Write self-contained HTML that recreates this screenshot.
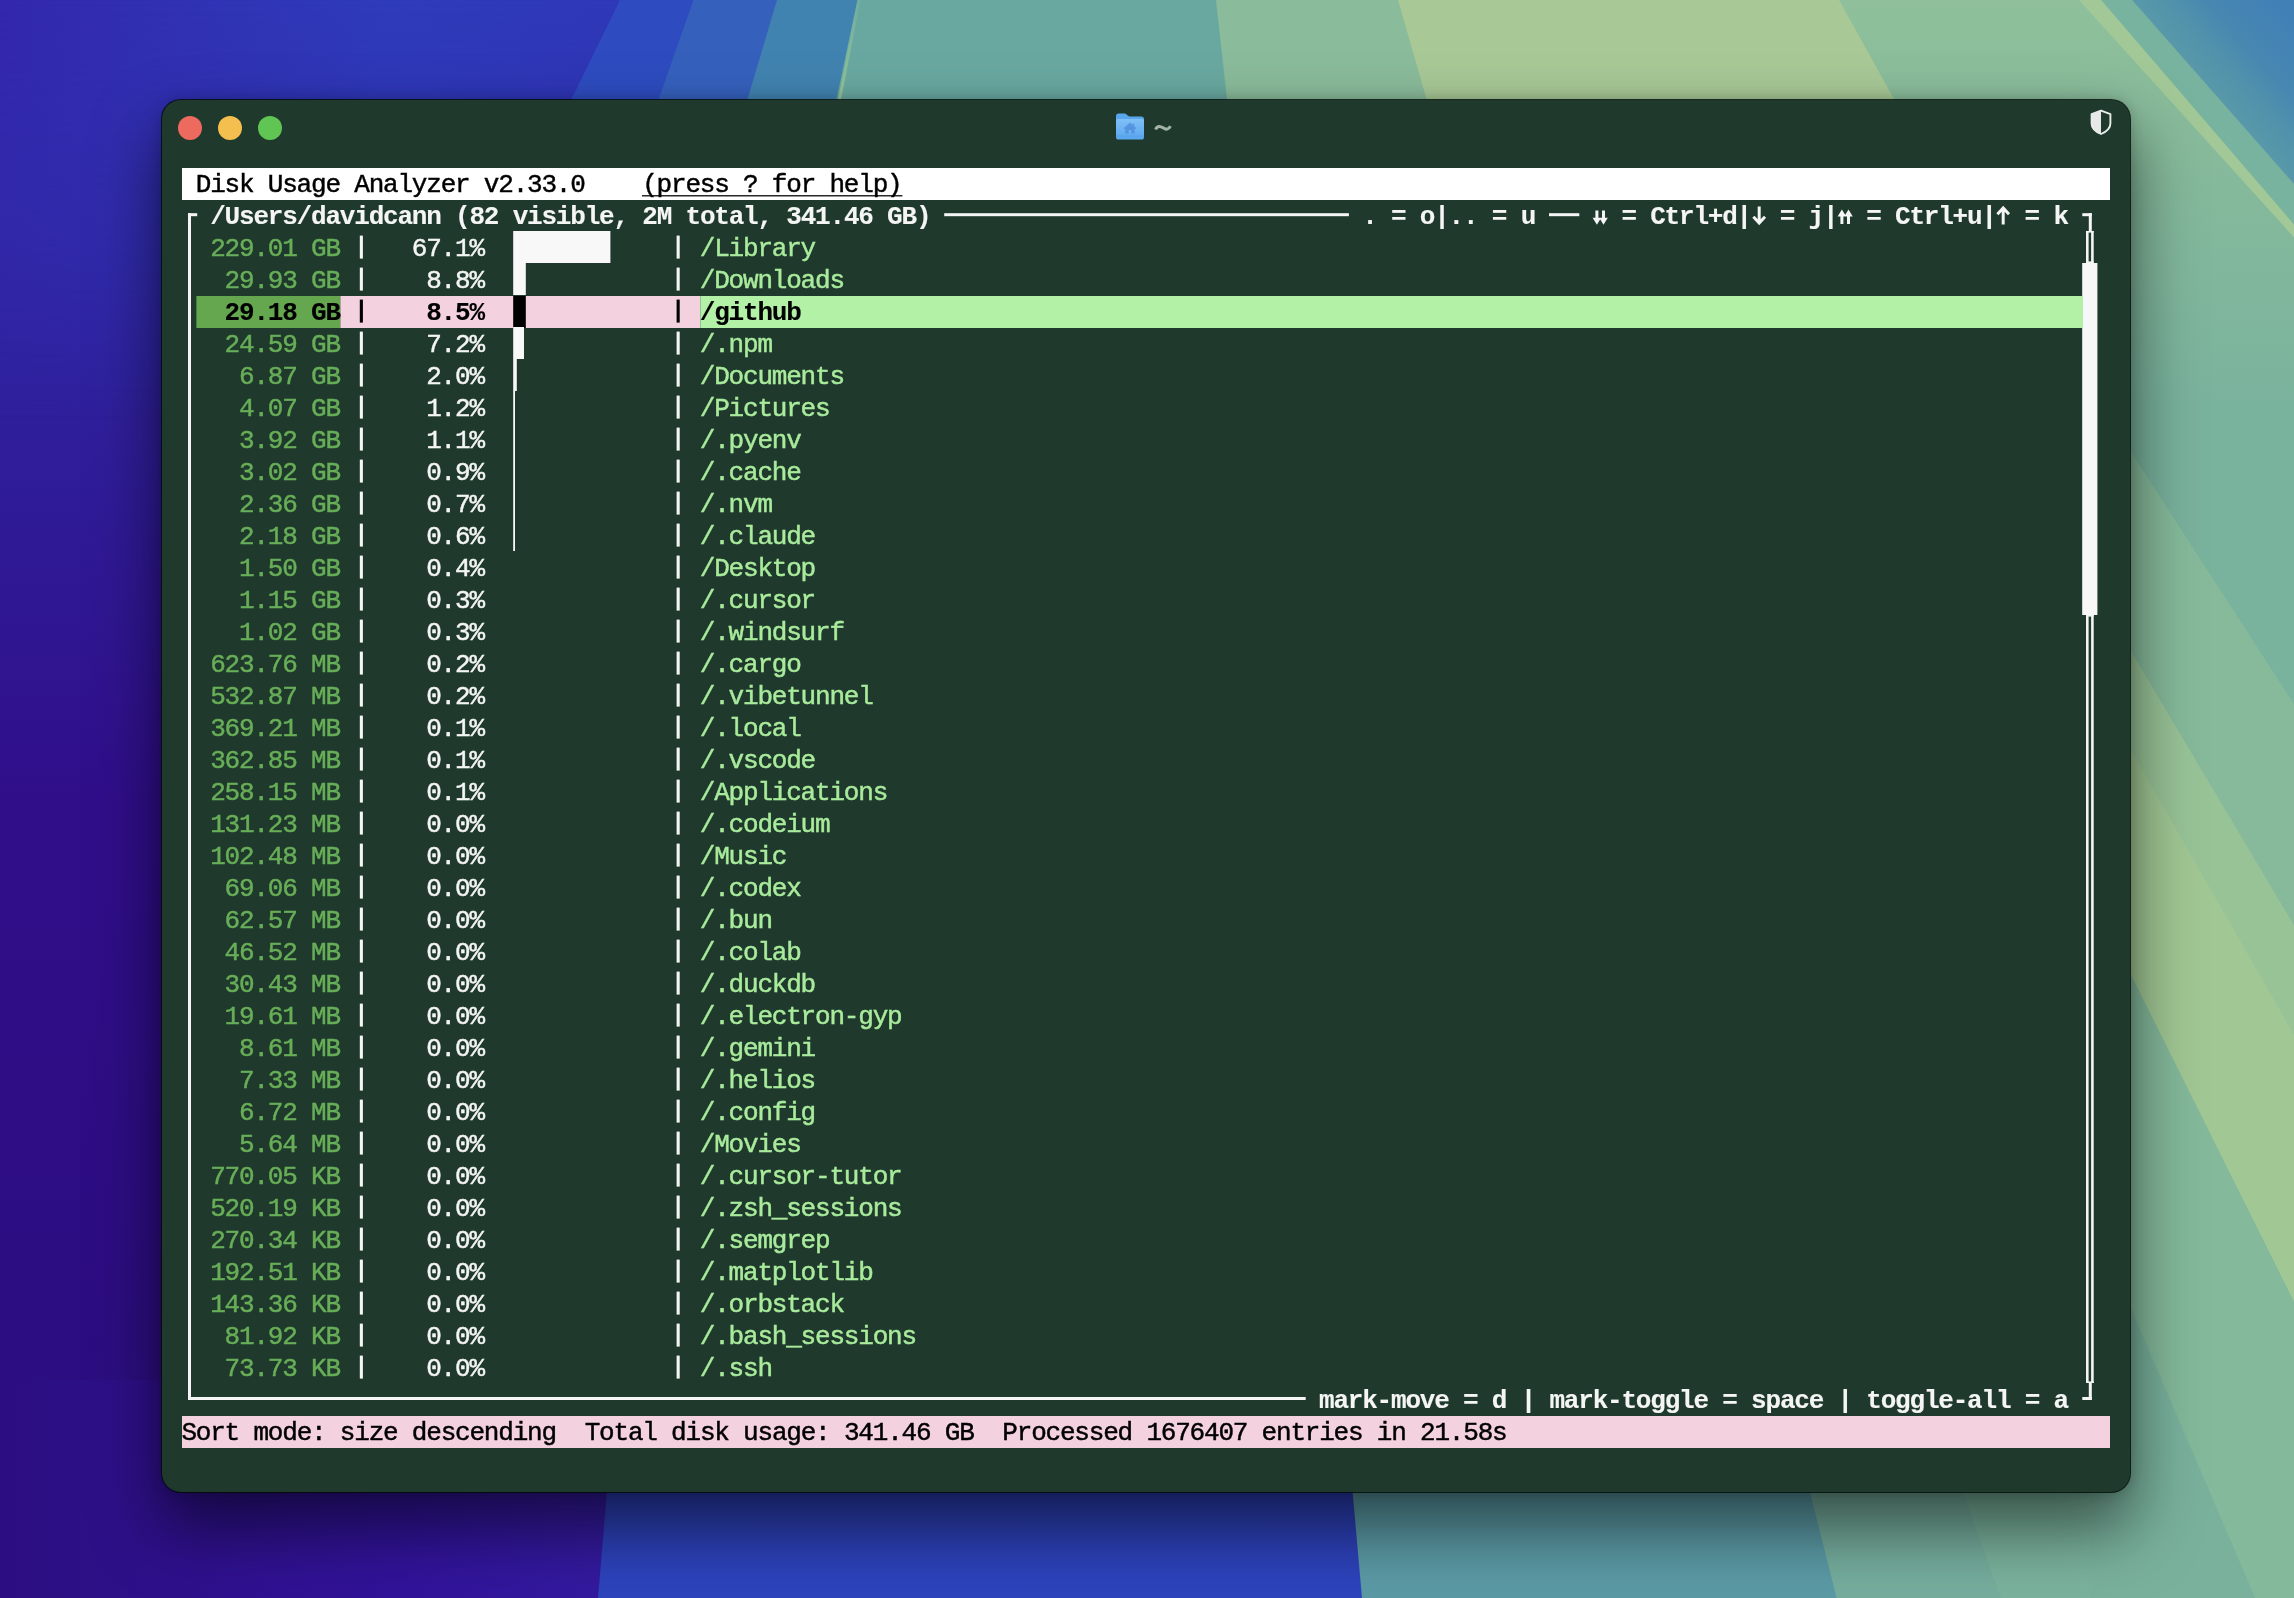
<!DOCTYPE html>
<html><head><meta charset="utf-8"><title>~</title>
<style>
html,body{margin:0;padding:0;}
body{width:2294px;height:1598px;overflow:hidden;position:relative;background:#2e1a8c;font-family:"Liberation Mono",monospace;}
#wall{position:absolute;left:0;top:0;width:2294px;height:1598px;}
#win{position:absolute;left:162px;top:100px;width:1968px;height:1392px;border-radius:19px;background:#1f3a2c;
 box-shadow:0 0 0 1px rgba(0,10,5,.8), 0 34px 64px 4px rgba(0,0,0,.52), 0 0 14px rgba(0,0,0,.22);}
.tl{position:absolute;width:24px;height:24px;border-radius:12px;top:116px;}
.t{position:absolute;height:32px;line-height:32px;font-size:26px;letter-spacing:-1.2px;white-space:pre;margin-top:1px;margin-left:-0.6px;-webkit-text-stroke:0.45px currentColor;}
.r{position:absolute;}
#term{position:absolute;left:0;top:0;width:2294px;height:1598px;will-change:transform;}
.k{color:#000;} .w{color:#f4f5f4;} .sg{color:#68ae58;} .ng{color:#a9eb9c;}
.b{font-weight:bold;-webkit-text-stroke:0.12px currentColor;}
.u{}
</style></head><body>
<svg id="wall" width="2294" height="1598" viewBox="0 0 2294 1598">
<defs>
<linearGradient id="gL" x1="0" y1="0" x2="0" y2="1">
<stop offset="0" stop-color="#312db0"/><stop offset="0.12" stop-color="#2f2aa8"/><stop offset="0.3" stop-color="#2f1c98"/><stop offset="0.5" stop-color="#300e8a"/><stop offset="0.8" stop-color="#2d0d82"/><stop offset="1" stop-color="#2b107f"/>
</linearGradient>
<linearGradient id="gT" x1="0" y1="0" x2="1" y2="0">
<stop offset="0" stop-color="#3327ac"/><stop offset="0.3" stop-color="#3033b4"/><stop offset="0.55" stop-color="#2e3bba"/><stop offset="1" stop-color="#2f37b7"/>
</linearGradient>
<linearGradient id="gTm" x1="0" y1="0" x2="0" y2="1">
<stop offset="0" stop-color="#fff" stop-opacity="1"/><stop offset="1" stop-color="#fff" stop-opacity="0"/>
</linearGradient>
<mask id="mT"><rect x="0" y="0" width="700" height="420" fill="url(#gTm)"/></mask>
<linearGradient id="gB" gradientUnits="userSpaceOnUse" x1="2200" y1="105" x2="2294" y2="22">
<stop offset="0" stop-color="#5d9ca8"/><stop offset="0.35" stop-color="#5293ab"/><stop offset="0.6" stop-color="#4787b1"/><stop offset="1" stop-color="#4180b6"/>
</linearGradient>
<linearGradient id="gG" gradientUnits="userSpaceOnUse" x1="0" y1="0" x2="0" y2="420">
<stop offset="0" stop-color="#8fc09b"/><stop offset="0.3" stop-color="#88bb9b"/><stop offset="1" stop-color="#79b29d"/>
</linearGradient>
<linearGradient id="gS" gradientUnits="userSpaceOnUse" x1="0" y1="0" x2="0" y2="100"><stop offset="0" stop-color="#8fc09a" stop-opacity="0.2"/><stop offset="1" stop-color="#9cc898" stop-opacity="0.9"/></linearGradient>
<linearGradient id="gP" x1="0" y1="0" x2="1" y2="0">
<stop offset="0" stop-color="#2c0e81"/><stop offset="0.6" stop-color="#31139a"/><stop offset="1" stop-color="#341da0"/>
</linearGradient>
<linearGradient id="gBl" x1="0" y1="0" x2="0" y2="1">
<stop offset="0" stop-color="#2a37ae"/><stop offset="1" stop-color="#2d44bd"/>
</linearGradient>
</defs>
<rect width="2294" height="1598" fill="url(#gL)"/>
<rect x="0" y="0" width="700" height="420" fill="url(#gT)" mask="url(#mT)"/>
<polygon points="620.0,0.0 2294.0,0.0 2294.0,820.0 218.3,820.0" fill="#2e4cbf" />
<polygon points="693.5,0.0 2294.0,0.0 2294.0,820.0 405.3,820.0" fill="#3561bd" />
<polygon points="777.0,0.0 2294.0,0.0 2294.0,820.0 533.5,820.0" fill="#4183b0" />
<polygon points="857.4,0.0 2294.0,0.0 2294.0,820.0 684.3,820.0" fill="#69a8a0" />
<polygon points="1216.0,0.0 2294.0,0.0 2294.0,820.0 1307.1,820.0" fill="#8abb9a" />
<polygon points="1398.0,0.0 2294.0,0.0 2294.0,820.0 1634.1,820.0" fill="#a8c896" />
<polygon points="1839.0,0.0 2294.0,0.0 2294.0,820.0 2294.6,820.0" fill="url(#gG)" />
<polygon points="857.4,0.0 860.5,0.0 839.0,110.0 836.0,110.0" fill="url(#gS)" />
<rect x="0" y="1380" width="700" height="218" fill="url(#gP)"/>
<polygon points="616.5,1380.0 2294.0,1380.0 2294.0,1598.0 598.0,1598.0" fill="url(#gBl)" />
<polygon points="1342.7,1380.0 2294.0,1380.0 2294.0,1598.0 1362.0,1598.0" fill="#5b9aa5" />
<polygon points="1781.9,1380.0 2294.0,1380.0 2294.0,1598.0 1836.6,1598.0" fill="#75ad9d" />
<polygon points="1922.8,1380.0 2294.0,1380.0 2294.0,1598.0 2001.0,1598.0" fill="#7ab29d" />
<rect x="2090" y="400" width="204" height="1198" fill="#79b29d"/>
<polygon points="2090.0,388.6 2294.0,704.0 2294.0,925.0 2090.0,582.1" fill="#86ba9b" />
<polygon points="2090.0,582.1 2294.0,925.0 2294.0,1302.0 2090.0,892.7" fill="#98c397" />
<polygon points="2090.0,678.9 2294.0,1035.0 2294.0,1302.0 2090.0,892.7" fill="#a1c794" />
<polygon points="2090.0,892.7 2294.0,1302.0 2294.0,1598.0 2255.0,1598.0 2090.0,1213.4" fill="#84b99b" />
<polygon points="2090.0,1213.4 2255.0,1598.0 2090.0,1598.0" fill="#79b19d" />
<polygon points="2101.0,0.0 2132.0,0.0 2294.0,184.0 2294.0,224.5" fill="#78b3a0" />
<polygon points="2079.0,0.0 2101.0,0.0 2294.0,224.5 2294.0,237.5" fill="#a3c897" />
<polygon points="2132.0,0.0 2294.0,0.0 2294.0,184.0" fill="url(#gB)" />
</svg>
<div id="win"></div>
<div class="tl" style="left:178px;background:#ed6a5e"></div>
<div class="tl" style="left:218px;background:#f5bf4f"></div>
<div class="tl" style="left:258px;background:#61c554"></div>
<svg class="r" style="left:1114px;top:111px" width="32" height="32" viewBox="0 0 32 32">
<defs><linearGradient id="fg" x1="0" y1="0" x2="0" y2="1"><stop offset="0" stop-color="#7fc0f6"/><stop offset="1" stop-color="#58a6ee"/></linearGradient></defs>
<path d="M2 5.2Q2 2.4 4.8 2.4H10.2Q11.6 2.4 12.6 3.4L14 4.8Q14.8 5.4 16 5.4H27.2Q30 5.4 30 8.2V12H2Z" fill="#5aa6ec"/>
<path d="M2 9.6Q2 8 3.6 8H28.4Q30 8 30 9.6V26Q30 28.6 27.4 28.6H4.6Q2 28.6 2 26Z" fill="url(#fg)"/>
<rect x="2" y="24.6" width="28" height="1" fill="#4a98e2" opacity=".55"/>
<path d="M16 11.6L9.6 17.2L10.6 18.2L11.4 17.5V22.6H20.6V17.5L21.4 18.2L22.4 17.2L20.2 15.3V12.6H18.8V14.1ZM14.6 19H17.4V22.6H14.6Z" fill="#4a86d6" fill-rule="evenodd" opacity=".7"/>
</svg>
<svg class="r" style="left:1154px;top:121px" width="18" height="14" viewBox="0 0 18 14"><path d="M1.6 8.6C3 4.6 6 4.8 9 6.8S14.8 8.8 16.4 5.2" stroke="#a3b3a6" stroke-width="3" fill="none"/></svg>
<svg class="r" style="left:2088px;top:108px" width="26" height="28" viewBox="0 0 26 28">
<path d="M13 2.6L22.4 6.2V15.4C22.4 20 18.4 23.6 13 26C7.600 23.6 3.6 20 3.6 15.4V6.2Z" fill="none" stroke="#e8eeea" stroke-width="1.9" stroke-linejoin="round"/>
<path d="M13 2.6L3.6 6.2V15.4C3.6 20 7.6 23.6 13 26Z" fill="#e6e9e7"/>
</svg>
<div id="term">
<svg class="r" style="left:0;top:0" width="2294" height="1598" viewBox="0 0 2294 1598"><rect x="182.00" y="168.00" width="1928.00" height="32.00" fill="#ffffff"/>
<rect x="642.00" y="195.00" width="260.40" height="1.50" fill="#2a2a2a"/>
<rect x="182.00" y="1416.00" width="1928.00" height="32.00" fill="#f3d1de"/>
<rect x="188.00" y="213.20" width="3.00" height="1186.80" fill="#f4f5f4"/>
<rect x="188.00" y="213.20" width="9.20" height="3.00" fill="#f4f5f4"/>
<rect x="944.20" y="213.20" width="404.70" height="3.00" fill="#f4f5f4"/>
<rect x="2082.30" y="213.20" width="9.50" height="3.00" fill="#f4f5f4"/>
<rect x="2088.80" y="213.20" width="3.00" height="17.80" fill="#f4f5f4"/>
<rect x="188.00" y="1397.00" width="1117.70" height="3.00" fill="#f4f5f4"/>
<rect x="2082.30" y="1397.00" width="9.50" height="3.00" fill="#f4f5f4"/>
<rect x="2088.80" y="1383.00" width="3.00" height="17.00" fill="#f4f5f4"/>
<rect x="1549.00" y="213.20" width="30.30" height="3.00" fill="#f4f5f4"/>
<rect x="2086.00" y="231.00" width="2.60" height="32.00" fill="#f4f5f4"/>
<rect x="2091.10" y="231.00" width="2.60" height="32.00" fill="#f4f5f4"/>
<rect x="2086.00" y="231.00" width="7.70" height="1.60" fill="#f4f5f4"/>
<rect x="2086.00" y="261.40" width="7.70" height="1.60" fill="#f4f5f4"/>
<rect x="2082.20" y="263.00" width="15.20" height="352.00" fill="#f7f7f8"/>
<rect x="2086.00" y="615.00" width="2.60" height="768.00" fill="#f4f5f4"/>
<rect x="2091.10" y="615.00" width="2.60" height="768.00" fill="#f4f5f4"/>
<rect x="2086.00" y="615.00" width="7.70" height="1.60" fill="#f4f5f4"/>
<rect x="2086.00" y="1381.40" width="7.70" height="1.60" fill="#f4f5f4"/>
<rect x="359.80" y="235.60" width="3.10" height="23.00" fill="#f4f5f4"/>
<rect x="676.60" y="235.60" width="3.10" height="23.00" fill="#f4f5f4"/>
<rect x="513.20" y="231.00" width="97.20" height="32.00" fill="#f8f8f9"/>
<rect x="359.80" y="267.60" width="3.10" height="23.00" fill="#f4f5f4"/>
<rect x="676.60" y="267.60" width="3.10" height="23.00" fill="#f4f5f4"/>
<rect x="513.20" y="263.00" width="12.60" height="32.00" fill="#f8f8f9"/>
<rect x="196.40" y="296.00" width="144.00" height="32.00" fill="#64a74e"/>
<rect x="340.40" y="296.00" width="360.00" height="32.00" fill="#f3d1de"/>
<rect x="700.40" y="296.00" width="1382.40" height="32.00" fill="#b2f1a6"/>
<rect x="359.80" y="299.60" width="3.10" height="23.00" fill="#000"/>
<rect x="676.60" y="299.60" width="3.10" height="23.00" fill="#000"/>
<rect x="513.20" y="296.00" width="12.60" height="32.00" fill="#000"/>
<rect x="359.80" y="331.60" width="3.10" height="23.00" fill="#f4f5f4"/>
<rect x="676.60" y="331.60" width="3.10" height="23.00" fill="#f4f5f4"/>
<rect x="513.20" y="327.00" width="10.80" height="32.00" fill="#f8f8f9"/>
<rect x="359.80" y="363.60" width="3.10" height="23.00" fill="#f4f5f4"/>
<rect x="676.60" y="363.60" width="3.10" height="23.00" fill="#f4f5f4"/>
<rect x="513.20" y="359.00" width="3.60" height="32.00" fill="#f8f8f9"/>
<rect x="359.80" y="395.60" width="3.10" height="23.00" fill="#f4f5f4"/>
<rect x="676.60" y="395.60" width="3.10" height="23.00" fill="#f4f5f4"/>
<rect x="513.20" y="391.00" width="1.80" height="32.00" fill="#f8f8f9"/>
<rect x="359.80" y="427.60" width="3.10" height="23.00" fill="#f4f5f4"/>
<rect x="676.60" y="427.60" width="3.10" height="23.00" fill="#f4f5f4"/>
<rect x="513.20" y="423.00" width="1.80" height="32.00" fill="#f8f8f9"/>
<rect x="359.80" y="459.60" width="3.10" height="23.00" fill="#f4f5f4"/>
<rect x="676.60" y="459.60" width="3.10" height="23.00" fill="#f4f5f4"/>
<rect x="513.20" y="455.00" width="1.80" height="32.00" fill="#f8f8f9"/>
<rect x="359.80" y="491.60" width="3.10" height="23.00" fill="#f4f5f4"/>
<rect x="676.60" y="491.60" width="3.10" height="23.00" fill="#f4f5f4"/>
<rect x="513.20" y="487.00" width="1.80" height="32.00" fill="#f8f8f9"/>
<rect x="359.80" y="523.60" width="3.10" height="23.00" fill="#f4f5f4"/>
<rect x="676.60" y="523.60" width="3.10" height="23.00" fill="#f4f5f4"/>
<rect x="513.20" y="519.00" width="1.80" height="32.00" fill="#f8f8f9"/>
<rect x="359.80" y="555.60" width="3.10" height="23.00" fill="#f4f5f4"/>
<rect x="676.60" y="555.60" width="3.10" height="23.00" fill="#f4f5f4"/>
<rect x="359.80" y="587.60" width="3.10" height="23.00" fill="#f4f5f4"/>
<rect x="676.60" y="587.60" width="3.10" height="23.00" fill="#f4f5f4"/>
<rect x="359.80" y="619.60" width="3.10" height="23.00" fill="#f4f5f4"/>
<rect x="676.60" y="619.60" width="3.10" height="23.00" fill="#f4f5f4"/>
<rect x="359.80" y="651.60" width="3.10" height="23.00" fill="#f4f5f4"/>
<rect x="676.60" y="651.60" width="3.10" height="23.00" fill="#f4f5f4"/>
<rect x="359.80" y="683.60" width="3.10" height="23.00" fill="#f4f5f4"/>
<rect x="676.60" y="683.60" width="3.10" height="23.00" fill="#f4f5f4"/>
<rect x="359.80" y="715.60" width="3.10" height="23.00" fill="#f4f5f4"/>
<rect x="676.60" y="715.60" width="3.10" height="23.00" fill="#f4f5f4"/>
<rect x="359.80" y="747.60" width="3.10" height="23.00" fill="#f4f5f4"/>
<rect x="676.60" y="747.60" width="3.10" height="23.00" fill="#f4f5f4"/>
<rect x="359.80" y="779.60" width="3.10" height="23.00" fill="#f4f5f4"/>
<rect x="676.60" y="779.60" width="3.10" height="23.00" fill="#f4f5f4"/>
<rect x="359.80" y="811.60" width="3.10" height="23.00" fill="#f4f5f4"/>
<rect x="676.60" y="811.60" width="3.10" height="23.00" fill="#f4f5f4"/>
<rect x="359.80" y="843.60" width="3.10" height="23.00" fill="#f4f5f4"/>
<rect x="676.60" y="843.60" width="3.10" height="23.00" fill="#f4f5f4"/>
<rect x="359.80" y="875.60" width="3.10" height="23.00" fill="#f4f5f4"/>
<rect x="676.60" y="875.60" width="3.10" height="23.00" fill="#f4f5f4"/>
<rect x="359.80" y="907.60" width="3.10" height="23.00" fill="#f4f5f4"/>
<rect x="676.60" y="907.60" width="3.10" height="23.00" fill="#f4f5f4"/>
<rect x="359.80" y="939.60" width="3.10" height="23.00" fill="#f4f5f4"/>
<rect x="676.60" y="939.60" width="3.10" height="23.00" fill="#f4f5f4"/>
<rect x="359.80" y="971.60" width="3.10" height="23.00" fill="#f4f5f4"/>
<rect x="676.60" y="971.60" width="3.10" height="23.00" fill="#f4f5f4"/>
<rect x="359.80" y="1003.60" width="3.10" height="23.00" fill="#f4f5f4"/>
<rect x="676.60" y="1003.60" width="3.10" height="23.00" fill="#f4f5f4"/>
<rect x="359.80" y="1035.60" width="3.10" height="23.00" fill="#f4f5f4"/>
<rect x="676.60" y="1035.60" width="3.10" height="23.00" fill="#f4f5f4"/>
<rect x="359.80" y="1067.60" width="3.10" height="23.00" fill="#f4f5f4"/>
<rect x="676.60" y="1067.60" width="3.10" height="23.00" fill="#f4f5f4"/>
<rect x="359.80" y="1099.60" width="3.10" height="23.00" fill="#f4f5f4"/>
<rect x="676.60" y="1099.60" width="3.10" height="23.00" fill="#f4f5f4"/>
<rect x="359.80" y="1131.60" width="3.10" height="23.00" fill="#f4f5f4"/>
<rect x="676.60" y="1131.60" width="3.10" height="23.00" fill="#f4f5f4"/>
<rect x="359.80" y="1163.60" width="3.10" height="23.00" fill="#f4f5f4"/>
<rect x="676.60" y="1163.60" width="3.10" height="23.00" fill="#f4f5f4"/>
<rect x="359.80" y="1195.60" width="3.10" height="23.00" fill="#f4f5f4"/>
<rect x="676.60" y="1195.60" width="3.10" height="23.00" fill="#f4f5f4"/>
<rect x="359.80" y="1227.60" width="3.10" height="23.00" fill="#f4f5f4"/>
<rect x="676.60" y="1227.60" width="3.10" height="23.00" fill="#f4f5f4"/>
<rect x="359.80" y="1259.60" width="3.10" height="23.00" fill="#f4f5f4"/>
<rect x="676.60" y="1259.60" width="3.10" height="23.00" fill="#f4f5f4"/>
<rect x="359.80" y="1291.60" width="3.10" height="23.00" fill="#f4f5f4"/>
<rect x="676.60" y="1291.60" width="3.10" height="23.00" fill="#f4f5f4"/>
<rect x="359.80" y="1323.60" width="3.10" height="23.00" fill="#f4f5f4"/>
<rect x="676.60" y="1323.60" width="3.10" height="23.00" fill="#f4f5f4"/>
<rect x="359.80" y="1355.60" width="3.10" height="23.00" fill="#f4f5f4"/>
<rect x="676.60" y="1355.60" width="3.10" height="23.00" fill="#f4f5f4"/></svg>
<div class="t k" style="left:196.4px;top:168px">Disk Usage Analyzer v2.33.0</div>
<div class="t k u" style="left:642.8px;top:168px">(press ? for help)</div>
<div class="t k" style="left:182.0px;top:1416px">Sort mode: size descending  Total disk usage: 341.46 GB  Processed 1676407 entries in 21.58s</div>
<div class="t w b" style="left:210.8px;top:200px">/Users/davidcann (82 visible, 2M total, 341.46 GB)</div>
<div class="t w b" style="left:1362.8px;top:200px">. = o|.. = u</div>
<div class="t w b" style="left:1607.6px;top:200px"> = Ctrl+d|</div>
<div class="t w b" style="left:1766.0px;top:200px"> = j|</div>
<div class="t w b" style="left:1852.4px;top:200px"> = Ctrl+u|</div>
<div class="t w b" style="left:2010.8px;top:200px"> = k</div>
<svg class="r" style="left:1593.2px;top:200px;overflow:visible" width="14.4" height="32" viewBox="0 0 14.4 32"><path d="M3.9 10.4V21M10.5 10.4V21" stroke="#f4f5f4" stroke-width="3" fill="none"/><path d="M-0.4 17.8H8.2L3.9 24.8ZM6.2 17.8H14.8L10.5 24.8Z" fill="#f4f5f4"/></svg>
<svg class="r" style="left:1751.6px;top:200px;overflow:visible" width="14.4" height="32" viewBox="0 0 14.4 32"><path d="M7.2 6.6V23M1.4 16.8L7.2 23L13 16.8" stroke="#f4f5f4" stroke-width="3" fill="none" stroke-linejoin="miter"/></svg>
<svg class="r" style="left:1838.0px;top:200px;overflow:visible" width="14.4" height="32" viewBox="0 0 14.4 32"><path d="M3.9 13V24M10.5 13V24" stroke="#f4f5f4" stroke-width="3" fill="none"/><path d="M-0.4 16.4H8.2L3.9 9.4ZM6.2 16.4H14.8L10.5 9.4Z" fill="#f4f5f4"/></svg>
<svg class="r" style="left:1996.4px;top:200px;overflow:visible" width="14.4" height="32" viewBox="0 0 14.4 32"><path d="M7.2 24.4V8M1.4 14.2L7.2 8L13 14.2" stroke="#f4f5f4" stroke-width="3" fill="none" stroke-linejoin="miter"/></svg>
<div class="t w b" style="left:1319.6px;top:1384px">mark-move = d | mark-toggle = space | toggle-all = a</div>
<div class="t sg" style="left:210.8px;top:232px">229.01 GB</div>
<div class="t w" style="left:412.4px;top:232px">67.1%</div>
<div class="t ng" style="left:700.4px;top:232px">/Library</div>
<div class="t sg" style="left:210.8px;top:264px"> 29.93 GB</div>
<div class="t w" style="left:412.4px;top:264px"> 8.8%</div>
<div class="t ng" style="left:700.4px;top:264px">/Downloads</div>
<div class="t k b" style="left:210.8px;top:296px"> 29.18 GB</div>
<div class="t k b" style="left:412.4px;top:296px"> 8.5%</div>
<div class="t k b" style="left:700.4px;top:296px">/github</div>
<div class="t sg" style="left:210.8px;top:328px"> 24.59 GB</div>
<div class="t w" style="left:412.4px;top:328px"> 7.2%</div>
<div class="t ng" style="left:700.4px;top:328px">/.npm</div>
<div class="t sg" style="left:210.8px;top:360px">  6.87 GB</div>
<div class="t w" style="left:412.4px;top:360px"> 2.0%</div>
<div class="t ng" style="left:700.4px;top:360px">/Documents</div>
<div class="t sg" style="left:210.8px;top:392px">  4.07 GB</div>
<div class="t w" style="left:412.4px;top:392px"> 1.2%</div>
<div class="t ng" style="left:700.4px;top:392px">/Pictures</div>
<div class="t sg" style="left:210.8px;top:424px">  3.92 GB</div>
<div class="t w" style="left:412.4px;top:424px"> 1.1%</div>
<div class="t ng" style="left:700.4px;top:424px">/.pyenv</div>
<div class="t sg" style="left:210.8px;top:456px">  3.02 GB</div>
<div class="t w" style="left:412.4px;top:456px"> 0.9%</div>
<div class="t ng" style="left:700.4px;top:456px">/.cache</div>
<div class="t sg" style="left:210.8px;top:488px">  2.36 GB</div>
<div class="t w" style="left:412.4px;top:488px"> 0.7%</div>
<div class="t ng" style="left:700.4px;top:488px">/.nvm</div>
<div class="t sg" style="left:210.8px;top:520px">  2.18 GB</div>
<div class="t w" style="left:412.4px;top:520px"> 0.6%</div>
<div class="t ng" style="left:700.4px;top:520px">/.claude</div>
<div class="t sg" style="left:210.8px;top:552px">  1.50 GB</div>
<div class="t w" style="left:412.4px;top:552px"> 0.4%</div>
<div class="t ng" style="left:700.4px;top:552px">/Desktop</div>
<div class="t sg" style="left:210.8px;top:584px">  1.15 GB</div>
<div class="t w" style="left:412.4px;top:584px"> 0.3%</div>
<div class="t ng" style="left:700.4px;top:584px">/.cursor</div>
<div class="t sg" style="left:210.8px;top:616px">  1.02 GB</div>
<div class="t w" style="left:412.4px;top:616px"> 0.3%</div>
<div class="t ng" style="left:700.4px;top:616px">/.windsurf</div>
<div class="t sg" style="left:210.8px;top:648px">623.76 MB</div>
<div class="t w" style="left:412.4px;top:648px"> 0.2%</div>
<div class="t ng" style="left:700.4px;top:648px">/.cargo</div>
<div class="t sg" style="left:210.8px;top:680px">532.87 MB</div>
<div class="t w" style="left:412.4px;top:680px"> 0.2%</div>
<div class="t ng" style="left:700.4px;top:680px">/.vibetunnel</div>
<div class="t sg" style="left:210.8px;top:712px">369.21 MB</div>
<div class="t w" style="left:412.4px;top:712px"> 0.1%</div>
<div class="t ng" style="left:700.4px;top:712px">/.local</div>
<div class="t sg" style="left:210.8px;top:744px">362.85 MB</div>
<div class="t w" style="left:412.4px;top:744px"> 0.1%</div>
<div class="t ng" style="left:700.4px;top:744px">/.vscode</div>
<div class="t sg" style="left:210.8px;top:776px">258.15 MB</div>
<div class="t w" style="left:412.4px;top:776px"> 0.1%</div>
<div class="t ng" style="left:700.4px;top:776px">/Applications</div>
<div class="t sg" style="left:210.8px;top:808px">131.23 MB</div>
<div class="t w" style="left:412.4px;top:808px"> 0.0%</div>
<div class="t ng" style="left:700.4px;top:808px">/.codeium</div>
<div class="t sg" style="left:210.8px;top:840px">102.48 MB</div>
<div class="t w" style="left:412.4px;top:840px"> 0.0%</div>
<div class="t ng" style="left:700.4px;top:840px">/Music</div>
<div class="t sg" style="left:210.8px;top:872px"> 69.06 MB</div>
<div class="t w" style="left:412.4px;top:872px"> 0.0%</div>
<div class="t ng" style="left:700.4px;top:872px">/.codex</div>
<div class="t sg" style="left:210.8px;top:904px"> 62.57 MB</div>
<div class="t w" style="left:412.4px;top:904px"> 0.0%</div>
<div class="t ng" style="left:700.4px;top:904px">/.bun</div>
<div class="t sg" style="left:210.8px;top:936px"> 46.52 MB</div>
<div class="t w" style="left:412.4px;top:936px"> 0.0%</div>
<div class="t ng" style="left:700.4px;top:936px">/.colab</div>
<div class="t sg" style="left:210.8px;top:968px"> 30.43 MB</div>
<div class="t w" style="left:412.4px;top:968px"> 0.0%</div>
<div class="t ng" style="left:700.4px;top:968px">/.duckdb</div>
<div class="t sg" style="left:210.8px;top:1000px"> 19.61 MB</div>
<div class="t w" style="left:412.4px;top:1000px"> 0.0%</div>
<div class="t ng" style="left:700.4px;top:1000px">/.electron-gyp</div>
<div class="t sg" style="left:210.8px;top:1032px">  8.61 MB</div>
<div class="t w" style="left:412.4px;top:1032px"> 0.0%</div>
<div class="t ng" style="left:700.4px;top:1032px">/.gemini</div>
<div class="t sg" style="left:210.8px;top:1064px">  7.33 MB</div>
<div class="t w" style="left:412.4px;top:1064px"> 0.0%</div>
<div class="t ng" style="left:700.4px;top:1064px">/.helios</div>
<div class="t sg" style="left:210.8px;top:1096px">  6.72 MB</div>
<div class="t w" style="left:412.4px;top:1096px"> 0.0%</div>
<div class="t ng" style="left:700.4px;top:1096px">/.config</div>
<div class="t sg" style="left:210.8px;top:1128px">  5.64 MB</div>
<div class="t w" style="left:412.4px;top:1128px"> 0.0%</div>
<div class="t ng" style="left:700.4px;top:1128px">/Movies</div>
<div class="t sg" style="left:210.8px;top:1160px">770.05 KB</div>
<div class="t w" style="left:412.4px;top:1160px"> 0.0%</div>
<div class="t ng" style="left:700.4px;top:1160px">/.cursor-tutor</div>
<div class="t sg" style="left:210.8px;top:1192px">520.19 KB</div>
<div class="t w" style="left:412.4px;top:1192px"> 0.0%</div>
<div class="t ng" style="left:700.4px;top:1192px">/.zsh_sessions</div>
<div class="t sg" style="left:210.8px;top:1224px">270.34 KB</div>
<div class="t w" style="left:412.4px;top:1224px"> 0.0%</div>
<div class="t ng" style="left:700.4px;top:1224px">/.semgrep</div>
<div class="t sg" style="left:210.8px;top:1256px">192.51 KB</div>
<div class="t w" style="left:412.4px;top:1256px"> 0.0%</div>
<div class="t ng" style="left:700.4px;top:1256px">/.matplotlib</div>
<div class="t sg" style="left:210.8px;top:1288px">143.36 KB</div>
<div class="t w" style="left:412.4px;top:1288px"> 0.0%</div>
<div class="t ng" style="left:700.4px;top:1288px">/.orbstack</div>
<div class="t sg" style="left:210.8px;top:1320px"> 81.92 KB</div>
<div class="t w" style="left:412.4px;top:1320px"> 0.0%</div>
<div class="t ng" style="left:700.4px;top:1320px">/.bash_sessions</div>
<div class="t sg" style="left:210.8px;top:1352px"> 73.73 KB</div>
<div class="t w" style="left:412.4px;top:1352px"> 0.0%</div>
<div class="t ng" style="left:700.4px;top:1352px">/.ssh</div>
</div>
</body></html>
